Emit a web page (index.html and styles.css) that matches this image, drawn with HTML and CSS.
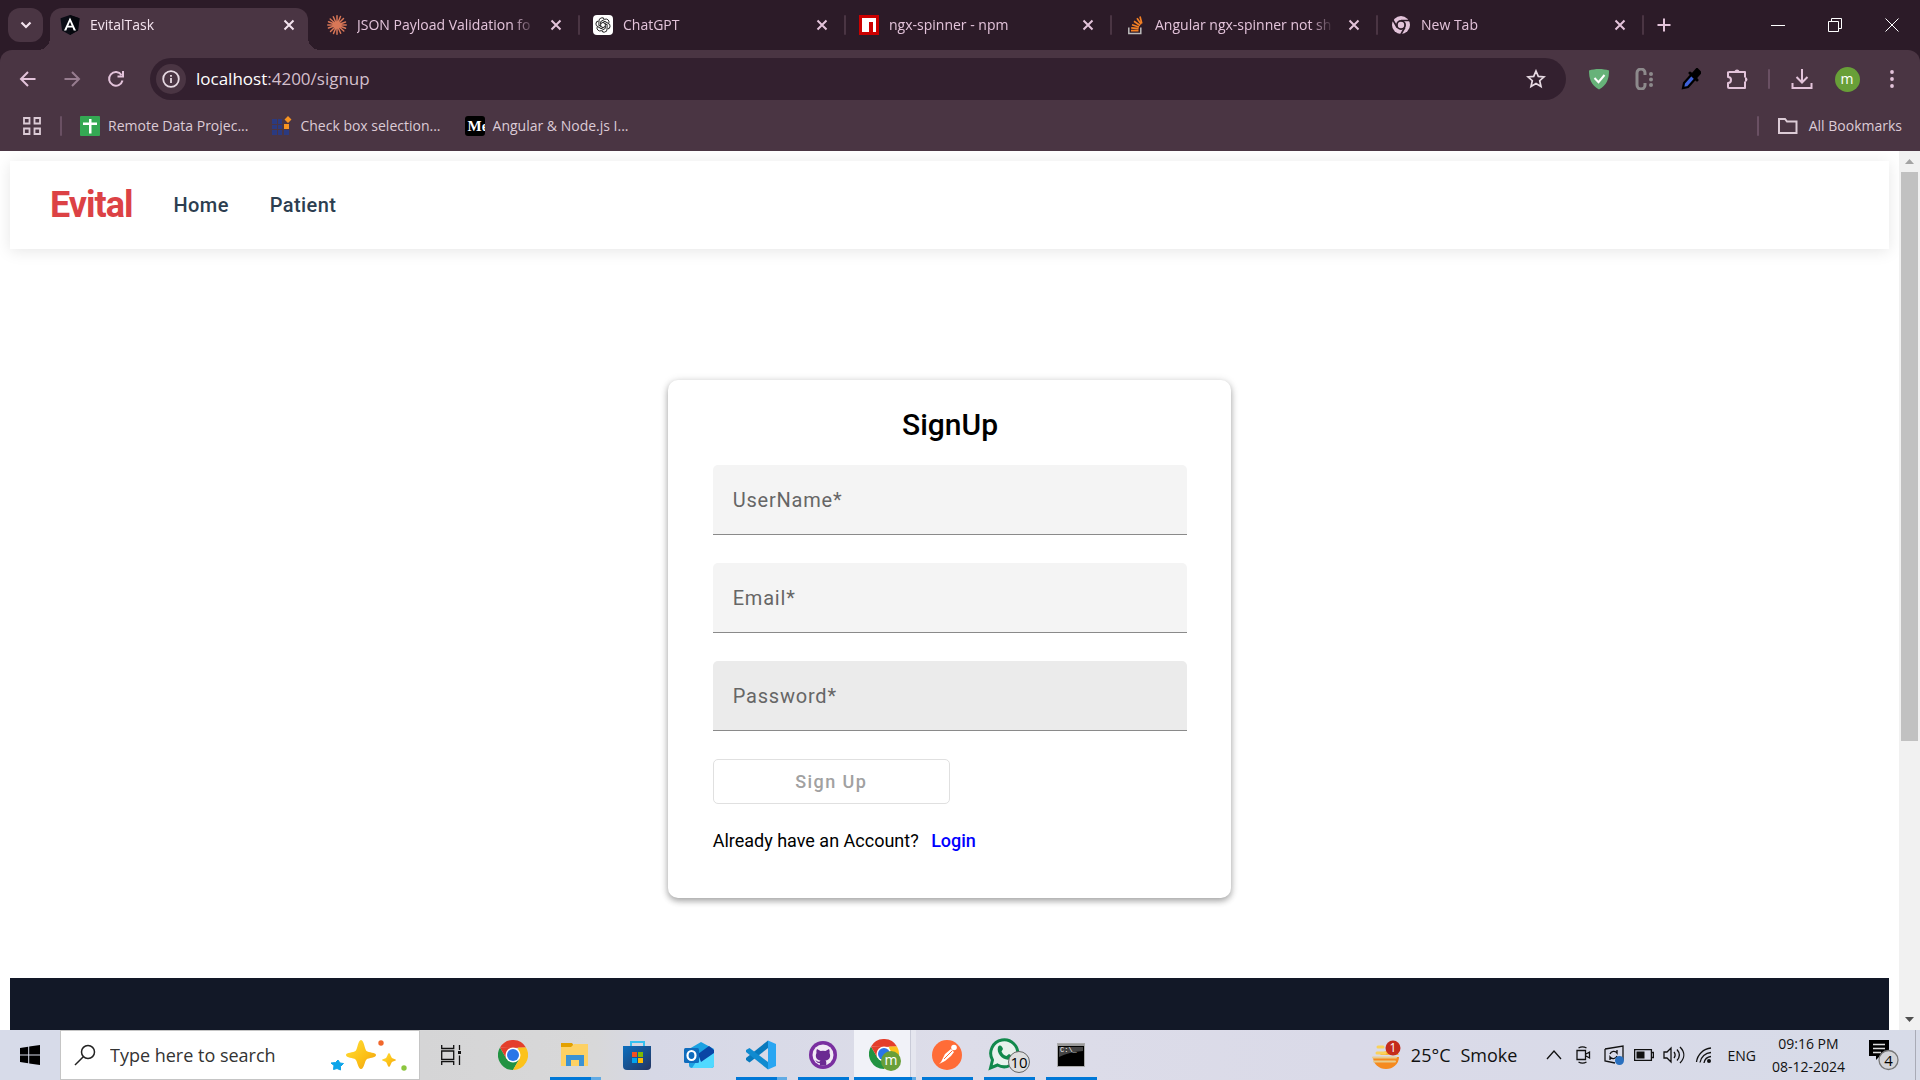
FILE: index.html
```html
<!DOCTYPE html>
<html lang="en">
<head>
<meta charset="utf-8">
<meta name="viewport" content="width=device-width, initial-scale=1">
<title>EvitalTask</title>
<link rel="stylesheet" href="styles.css">
</head>
<body>
<div class="screen">

<header class="browser">
  <div class="strip">
    <button class="tab-search" aria-label="Search tabs"><svg width="12" height="12" viewBox="0 0 12 12"><path d="M1.500 3.500L6 8l4.500-4.500" fill="none" stroke="currentColor" stroke-width="2.200"/></svg></button>
    <div class="tabs">
      <div class="tab active">
        <svg width="20" height="20" viewBox="0 0 20 20"><path d="M10 0l9.500 3.300L18 15.500 10 20l-8-4.500L.5 3.300z" fill="#0b0d16"/><path d="M10 0l9.500 3.300L18 15.500 10 20z" fill="#05070d"/><path d="M10 2.500L4 15.500h2.300l1.200-3h5l1.200 3H16zm0 4.300l1.700 3.900H8.300z" fill="#fff"/></svg>
        <span class="tab-title">EvitalTask</span>
        <button class="close" aria-label="Close tab"><svg width="12" height="12" viewBox="0 0 12 12"><path d="M1.500 1.500l9 9m0-9l-9 9"/></svg></button>
      </div>
      <span class="tab-sep hidden-sep"></span>
      <div class="tab">
        <svg width="20" height="20" viewBox="0 0 20 20"><g stroke="#d97757" stroke-width="1.500" stroke-linecap="round"><path d="M10 .8v18.400M.8 10h18.400M3.200 4l13.600 12M16.500 3.500l-13 13M6.300 1.800l7.400 16.400M13.500 1.500L6.500 18.500M1.500 6.800l17 6.400M18.500 7l-17 6"/></g></svg>
        <span class="tab-title">JSON Payload Validation fo</span>
        <button class="close" aria-label="Close tab"><svg width="12" height="12" viewBox="0 0 12 12"><path d="M1.500 1.500l9 9m0-9l-9 9"/></svg></button>
      </div>
      <span class="tab-sep"></span>
      <div class="tab">
        <svg width="20" height="20" viewBox="0 0 20 20"><rect width="20" height="20" rx="4" fill="#fff"/><g fill="none" stroke="#222" stroke-width="1"><g id="petal"><path d="M7.700 11.300V6.600l3.900-2.200a3 3 0 0 1 4.300 3.500"/></g><use href="#petal" transform="rotate(60 10 10)"/><use href="#petal" transform="rotate(120 10 10)"/><use href="#petal" transform="rotate(180 10 10)"/><use href="#petal" transform="rotate(240 10 10)"/><use href="#petal" transform="rotate(300 10 10)"/></g></svg>
        <span class="tab-title">ChatGPT</span>
        <button class="close" aria-label="Close tab"><svg width="12" height="12" viewBox="0 0 12 12"><path d="M1.500 1.500l9 9m0-9l-9 9"/></svg></button>
      </div>
      <span class="tab-sep"></span>
      <div class="tab">
        <svg width="20" height="20" viewBox="0 0 20 20"><path d="M0 0h20v20H0z" fill="#cb0000"/><path d="M3 3h14v14h-3V7h-4v10H3z" fill="#fff"/></svg>
        <span class="tab-title">ngx-spinner - npm</span>
        <button class="close" aria-label="Close tab"><svg width="12" height="12" viewBox="0 0 12 12"><path d="M1.500 1.500l9 9m0-9l-9 9"/></svg></button>
      </div>
      <span class="tab-sep"></span>
      <div class="tab">
        <svg width="20" height="20" viewBox="0 0 20 20"><path d="M3.800 12.500v6h12v-6" fill="none" stroke="#bcbbbb" stroke-width="1.500"/><path d="M6 15.700h7.500M6.200 12.800l7.400.8M7 9.700l7 2.300M9 6.300l6 4.200M12 3.300l4.200 6M15 1.500l1.800 7" fill="none" stroke="#f48024" stroke-width="1.700"/></svg>
        <span class="tab-title">Angular ngx-spinner not sh</span>
        <button class="close" aria-label="Close tab"><svg width="12" height="12" viewBox="0 0 12 12"><path d="M1.500 1.500l9 9m0-9l-9 9"/></svg></button>
      </div>
      <span class="tab-sep"></span>
      <div class="tab">
        <svg width="20" height="20" viewBox="0 0 20 20"><circle cx="10" cy="10" r="9" fill="#e3c3da"/><circle cx="10" cy="10" r="4.100" fill="#e3c3da" stroke="#2c1b28" stroke-width="1.800"/><path d="M10 5.500h9M6.200 12.500L1.700 4.700M13.800 12.500l-4.500 7.800" stroke="#2c1b28" stroke-width="1.700"/></svg>
        <span class="tab-title">New Tab</span>
        <button class="close" aria-label="Close tab"><svg width="12" height="12" viewBox="0 0 12 12"><path d="M1.500 1.500l9 9m0-9l-9 9"/></svg></button>
      </div>
      <span class="tab-sep"></span>
      <button class="new-tab" aria-label="New tab"><svg width="14" height="14" viewBox="0 0 14 14"><path d="M7 .5v13M.5 7h13" stroke="currentColor" stroke-width="2"/></svg></button>
    </div>
    <div class="window-controls">
      <button aria-label="Minimize"><svg width="14" height="14" viewBox="0 0 14 14"><path d="M0 7.500h14"/></svg></button>
      <button aria-label="Restore"><svg width="14" height="14" viewBox="0 0 14 14"><path d="M.5 3.500h10v10H.5zM3.500 3V.5h10v10H11"/></svg></button>
      <button aria-label="Close"><svg width="14" height="14" viewBox="0 0 14 14"><path d="M.5.5l13 13m0-13l-13 13"/></svg></button>
    </div>
  </div>

  <div class="toolbar">
    <div class="tools">
      <button aria-label="Back"><svg width="20" height="20" viewBox="0 0 20 20"><path d="M17.500 10H3.500M10 3L3 10l7 7" class="line"/></svg></button>
      <button aria-label="Forward" class="dim"><svg width="20" height="20" viewBox="0 0 20 20"><path d="M2.500 10h14M10 3l7 7-7 7" class="line"/></svg></button>
      <button aria-label="Reload"><svg width="20" height="20" viewBox="0 0 20 20"><path d="M16.500 11.500A6.800 6.800 0 1 1 15.500 6M17 2v5.500h-5.500" class="line"/></svg></button>
    </div>
    <div class="omnibox">
      <button class="site-info" aria-label="Site information"><svg width="18" height="18" viewBox="0 0 18 18"><circle cx="9" cy="9" r="7.800" fill="none" stroke="currentColor" stroke-width="1.800"/><path d="M9 8v5M9 5v1.800" stroke="currentColor" stroke-width="1.800"/></svg></button>
      <span class="url"><b>localhost</b>:4200/signup</span>
      <button class="star" aria-label="Bookmark this tab"><svg width="20" height="20" viewBox="0 0 20 20"><path d="M10 2l2.300 5.400 5.700.5-4.300 3.800 1.300 5.700-5-3-5 3 1.300-5.700L2 7.900l5.700-.5z" fill="none" stroke="currentColor" stroke-width="1.700"/></svg></button>
    </div>
    <div class="tools extensions">
      <button aria-label="AdGuard"><svg width="22" height="22" viewBox="0 0 22 22"><path d="M11 1C7.500 1 4 1.500 1 2.500 1 11 3 17 11 21.500 19 17 21 11 21 2.500 18 1.500 14.500 1 11 1z" fill="#67b279"/><path d="M6.500 10l4 4.200L16.500 7" fill="none" stroke="#fff" stroke-width="2"/></svg></button>
      <button aria-label="Clear cache"><svg width="20" height="22" viewBox="0 0 20 22"><path d="M10 7V5a4 4 0 0 0-8 0v12a4 4 0 0 0 8 0v-2" fill="none" stroke="#8d8a8c" stroke-width="3"/><g fill="#8d8a8c"><circle cx="16" cy="6" r="2"/><circle cx="16" cy="11.500" r="2"/><circle cx="16" cy="17" r="2"/></g></svg></button>
      <button aria-label="Color picker"><svg width="20" height="22" viewBox="0 0 20 22"><path d="M2 20l1-5 8-9 4 4-8 9z" fill="#3f62d9" stroke="#000" stroke-width="2.200"/><path d="M9 5l7 7M12 6l4-4.500 3 3L15 9z" stroke="#000" stroke-width="3" stroke-linecap="round"/></svg></button>
      <button aria-label="Extensions"><svg width="22" height="22" viewBox="0 0 22 22"><path d="M3 4h16v5.500M19 13.500V20H3a1 1 0 0 1-1-1v-4a3 3 0 0 0 0-6V4.500L3 4" class="line" stroke-linejoin="round"/><path d="M8.500 4a2.500 2.500 0 0 1 5 0zM19 9a2.500 2.500 0 0 1 0 5z" fill="currentColor"/></svg></button>
    </div>
    <span class="bar-sep"></span>
    <div class="tools actions">
      <button aria-label="Downloads"><svg width="22" height="22" viewBox="0 0 22 22"><path d="M11 1v13M5.500 9l5.500 5.500L16.500 9M1.500 15v5h19v-5" class="line"/></svg></button>
      <button aria-label="Profile"><span class="avatar">m</span></button>
      <button aria-label="Menu"><svg width="20" height="20" viewBox="0 0 20 20" fill="currentColor"><circle cx="10" cy="3" r="1.900"/><circle cx="10" cy="10" r="1.900"/><circle cx="10" cy="17" r="1.900"/></svg></button>
    </div>
  </div>

  <nav class="bookmarks" aria-label="Bookmarks">
    <button class="apps" aria-label="Apps"><svg width="20" height="20" viewBox="0 0 20 20"><path d="M2 2h5.500v5.500H2zM12.500 2H18v5.500h-5.500zM2 12.500h5.500V18H2zM12.500 12.500H18V18h-5.500z" fill="none" stroke="currentColor" stroke-width="1.800"/></svg></button>
    <span class="bar-sep"></span>
    <a class="bookmark" href="#"><svg width="20" height="20" viewBox="0 0 20 20"><rect width="20" height="20" rx="1" fill="#34a853"/><path d="M9 3h2.500v3.500H17V9h-5.500v8.500H9V9H3V6.500h6z" fill="#fff"/></svg>Remote Data Projec...</a>
    <a class="bookmark" href="#"><svg width="20" height="20" viewBox="0 0 20 20"><path d="M0 3h5v5H0zM6 3h4v5H6zM0 9h5v4H0zM6 9h4v4H6zM0 14h5v5H0zM6 14h4v5H6zM12 14h5v5h-5z" fill="#2b3a80"/><path d="M12 8h5v5h-5zM16 0l3.500 3.500L16 7l-3.500-3.500z" fill="#f79421"/></svg>Check box selection...</a>
    <a class="bookmark" href="#"><span class="medium" aria-hidden="true">Me</span>Angular &amp; Node.js I...</a>
    <span class="bar-sep all-sep"></span>
    <a class="bookmark all" href="#"><svg width="22" height="18" viewBox="0 0 22 18"><path d="M2 2h6l2 2.500h9.500V16H2z" class="line"/></svg>All Bookmarks</a>
  </nav>
</header>

<div class="viewport">
  <div class="page">
    <nav class="navbar">
      <a class="brand" href="#">Evital</a>
      <a class="nav-link" href="#">Home</a>
      <a class="nav-link" href="#">Patient</a>
    </nav>
    <main class="main">
      <form class="card">
        <h1 class="card-title">SignUp</h1>
        <div class="field"><label for="username">UserName*</label><input id="username" type="text"></div>
        <div class="field"><label for="email">Email*</label><input id="email" type="email"></div>
        <div class="field hovered"><label for="password">Password*</label><input id="password" type="password"></div>
        <button class="submit" type="submit" disabled>Sign Up</button>
        <p class="account">Already have an Account? <a href="#">Login</a></p>
      </form>
    </main>
    <footer class="footer"></footer>
  </div>
  <div class="scrollbar" aria-hidden="true">
    <svg width="21" height="21" viewBox="0 0 21 21"><path d="M6 13l4.500-5L15 13z" fill="#a3a3a3"/></svg>
    <div class="track"><div class="thumb"></div></div>
    <svg width="21" height="21" viewBox="0 0 21 21"><path d="M6 8l4.500 5L15 8z" fill="#505050"/></svg>
  </div>
</div>

<footer class="taskbar">
  <button class="start" aria-label="Start"><svg width="20" height="20" viewBox="0 0 20 20"><path d="M0 3l8.200-1.200V9.500H0zM9.200 1.600L20 0v9.500H9.200zM0 10.500h8.200v7.700L0 17zM9.200 10.500H20V20L9.200 18.400z"/></svg></button>
  <label class="search">
    <svg width="22" height="22" viewBox="0 0 22 22"><circle cx="14" cy="8" r="6.500" fill="none" stroke="#222" stroke-width="1.500"/><path d="M9.300 12.700L1 21" stroke="#222" stroke-width="1.500"/></svg>
    <input type="text" placeholder="Type here to search" aria-label="Type here to search">
    <svg width="78" height="32" viewBox="0 0 78 32"><defs><linearGradient id="gold" x1="0" y1="0" x2="1" y2="1"><stop offset="0" stop-color="#ffe03a"/><stop offset=".6" stop-color="#fcbf15"/><stop offset="1" stop-color="#e99a1c"/></linearGradient></defs><path d="M30 1c3 0 3.500 9 5.500 11S45 13 45 16s-7.500 2.500-9.500 4.500S33 30 30 30s-3.500-7.500-5.500-9.500S15 19 15 16s7.500-2 9.500-4S27 1 30 1z" fill="url(#gold)"/><path d="M58 14c1 0 2 4 3 5s4 1 4 2-3 1-4 2-2 5-3 5-2-4-3-5-4-1-4-2 3-1 4-2 2-5 3-5z" fill="url(#gold)"/><path d="M7 21l2 3 3.500.500-3 3 0 3.500-3.500-1.500-3.500 1 .5-4L0 24l4.500-.5z" fill="#0ea5e9" stroke="#0ea5e9" stroke-width="1" stroke-linejoin="round"/><circle cx="50" cy="4" r="2.700" fill="#f1672b"/><circle cx="73" cy="29" r="2.700" fill="#8cc63f"/></svg>
  </label>
  <div class="apps-row">
    <button class="app" aria-label="Task view"><svg width="20" height="20" viewBox="0 0 20 20" fill="none" stroke="#111" stroke-width="1.300"><path d="M.7 0v3.500h12V0M.7 6h12v8.500H.7zM.7 20v-3.300h12V20M18.500 0v5M18.500 10.500V20"/><path d="M17 6h3v3h-3z" fill="#111" stroke="none"/></svg></button>
    <button class="app" aria-label="Chrome"><svg width="30" height="30" viewBox="0 0 30 30"><g id="chrome"><path d="M2 7.500A15 15 0 0 1 28 7.500L15 8z" fill="#e43e2b"/><path d="M2 7.500A15 15 0 0 0 15 30l6.500-11.200L15 21l-6.500-2.200z" fill="#229342"/><path d="M28 7.500A15 15 0 0 1 15 30l6.500-11.200L20 7.500z" fill="#fcc21b"/><path d="M2 7.500h26H15L8.500 18.800z" fill="#e43e2b"/><circle cx="15" cy="15" r="7.500" fill="#fff"/><circle cx="15" cy="15" r="6" fill="#2a76e8"/></g></svg></button>
    <button class="app open stacked" aria-label="File Explorer"><svg width="30" height="30" viewBox="0 0 30 30"><path d="M1 3h11l2 3v4H1z" fill="#e3a100"/><path d="M1 7h10l3-3h14v22H1z" fill="#fdd164"/><path d="M6 26V15h18v11h-5v-6h-8v6z" fill="#3b92d4"/></svg></button>
    <button class="app" aria-label="Microsoft Store"><svg width="30" height="30" viewBox="0 0 30 30"><defs><linearGradient id="store" x1="0" y1="0" x2="1" y2="1"><stop offset="0" stop-color="#0b6fc0"/><stop offset="1" stop-color="#25345f"/></linearGradient></defs><path d="M9 9V2h13v7" fill="none" stroke="#35c1f1" stroke-width="2"/><path d="M1 6h28v20a4 4 0 0 1-4 4H5a4 4 0 0 1-4-4z" fill="url(#store)"/><path d="M10 12h5v5h-5z" fill="#f25022"/><path d="M16 12h5v5h-5z" fill="#7fba00"/><path d="M10 18h5v5h-5z" fill="#00a4ef"/><path d="M16 18h5v5h-5z" fill="#ffb900"/></svg></button>
    <button class="app" aria-label="Outlook"><svg width="30" height="30" viewBox="0 0 30 30"><path d="M5 9l12-7 13 7v16a3 3 0 0 1-3 3H8a3 3 0 0 1-3-3z" fill="#1ba1e2"/><path d="M16 16l14-7v16a3 3 0 0 1-3 3H8z" fill="#50d9ff"/><path d="M14 14L25 6l5 4v3L17 22z" fill="#0a45a5"/><rect y="8" width="15" height="15" rx="1.500" fill="#0f6cbd"/><ellipse cx="7.500" cy="15.500" rx="4" ry="4.500" fill="none" stroke="#fff" stroke-width="2.200"/></svg></button>
    <button class="app open stacked" aria-label="Visual Studio Code"><svg width="30" height="30" viewBox="0 0 30 30"><path d="M22 .5V8L3.500 22.500 0 20v-2z" fill="#0879bd"/><path d="M22 29.500V22L3.500 8 0 10v2z" fill="#108bd0"/><path d="M22 .5L30 4v22l-8 3.500z" fill="#29a6f2"/></svg></button>
    <button class="app open" aria-label="GitHub Desktop"><svg width="28" height="28" viewBox="0 0 28 28"><circle cx="14" cy="14" r="14" fill="#7a2fa0"/><circle cx="14" cy="14" r="10.500" fill="#f1eaf5"/><path d="M8 8l3.500 2a10 10 0 0 1 5 0L20 8c1 2 .6 3 .5 4 1.500 3 .5 7-4 7.500 1 1 .8 2 .8 5h-6.500v-2.500c-3 .5-3-1.500-4.500-2.500 2-.5 2 2 4.500 1 0-.5.300-.8.700-1-4.500-.5-5.500-4.500-4-7.500 0-1-.5-2 .5-4z" fill="#6b2a92"/></svg></button>
    <button class="app open current" aria-label="Chrome, profile m"><svg width="32" height="32" viewBox="0 0 32 32"><use href="#chrome"/><circle cx="22" cy="22" r="10" fill="#689f38"/><text x="22" y="26" text-anchor="middle" class="badge-m">m</text></svg></button>
    <button class="app open" aria-label="Postman"><svg width="30" height="30" viewBox="0 0 30 30"><circle cx="15" cy="15" r="15" fill="#ff6c37"/><path d="M19 9l3 3-3 4-6 5-6 3 2-2 4-8z" fill="#fff"/><circle cx="22" cy="7.500" r="2.800" fill="#fff"/><path d="M12 19l8-8" stroke="#ff6c37" stroke-width="1"/></svg></button>
    <button class="app open" aria-label="WhatsApp"><svg width="42" height="36" viewBox="0 0 42 36"><path d="M2.500 31l2-8a13.500 13.500 0 1 1 5 5z" fill="#e8f2ed" stroke="#11894c" stroke-width="3"/><path d="M10 10c2-3 4-1 5 2l-1.500 2.500c1.500 3 3 4 5 4.500L21 17c4 2 4 3 2 5-7 3-15-5-13-12z" fill="#11894c"/><circle cx="31" cy="25" r="10.500" fill="#dededf" stroke="#666"/><text x="31" y="31" text-anchor="middle" class="badge-count">10</text></svg></button>
    <button class="app open" aria-label="Command Prompt"><svg width="28" height="24" viewBox="0 0 28 24"><path d="M.5.5h27v23H.5z" fill="#000" stroke="#aaa"/><path d="M1 1h26v2H1z" fill="#999"/><path d="M2 4h24v4Q12 9 2 14z" fill="#444"/><text x="3" y="9" class="prompt">C:\_</text></svg></button>
  </div>
  <div class="tray">
    <button class="weather"><svg width="30" height="30" viewBox="0 0 30 30"><path d="M2 17h26a13 12 0 0 1-26 0z" fill="#f58a1f"/><path d="M9 15a12 11 0 0 1 19 0z" fill="#f9b233"/><path d="M7 7h5M6 13h8" stroke="#fad25a" stroke-width="3"/><path d="M2 17.500h23M3 21.500h21" stroke="#e9cc8c" stroke-width="2"/><circle cx="22" cy="8" r="7.500" fill="#c42b1c"/><text x="22" y="12" text-anchor="middle" class="badge-one">1</text></svg><span>25°C</span><span>Smoke</span></button>
    <button aria-label="Show hidden icons"><svg width="16" height="16" viewBox="0 0 16 16"><path d="M1 12l7-8 7 8"/></svg></button>
    <button aria-label="Meet now"><svg width="16" height="18" viewBox="0 0 16 18"><path d="M1 4.500h8.500v9H1zM10 8l3.500-2v6L10 10M2.500 2C5 .5 8 .5 10.500 2M2.500 16c2.500 1.500 5.500 1.500 8 0"/></svg></button>
    <button aria-label="Updates"><svg width="20" height="20" viewBox="0 0 20 20"><path d="M1 4l18-3v14M1 4v12l10 2M6 9a4 4 0 0 1 7-1V5M13 11a4 4 0 0 1-7 1v3"/><circle cx="15.500" cy="15.500" r="4.500" fill="#2a70bf" stroke="none"/></svg></button>
    <button aria-label="Battery"><svg width="20" height="12" viewBox="0 0 20 12"><path d="M.6.6h16.800v10.800H.6zM18 3.500h1.400v5H18"/><path d="M2.500 2.500h8v7h-8z" fill="#111" stroke="none"/></svg></button>
    <button aria-label="Volume"><svg width="22" height="18" viewBox="0 0 22 18"><path d="M1 6h3l4-4v14l-4-4H1zM11 6c1.500 2 1.500 4 0 6M14 3.500c3 3.500 3 7.500 0 11M17 1c5 5 5 11 0 16"/></svg></button>
    <button aria-label="Network"><svg width="18" height="18" viewBox="0 0 18 18"><path d="M1.500 16A16 16 0 0 1 16 2M5 16.500A12 12 0 0 1 16 6.500M9 17a8 8 0 0 1 7-6.500"/><circle cx="14" cy="15" r="2" fill="#111" stroke="none"/></svg></button>
    <span class="lang">ENG</span>
    <div class="clock"><span>09:16 PM</span><span>08-12-2024</span></div>
    <button class="notify" aria-label="Notifications"><svg width="30" height="32" viewBox="0 0 30 32"><path d="M0 1h20v16h-9l-4 4v-4H0z" fill="#000" stroke="none"/><path d="M4 5.500h12M4 9.500h12M4 13.500h8" stroke="#ddd"/><circle cx="19.500" cy="21" r="9.500" fill="#d3d4d8" stroke="#777"/><text x="19.500" y="27" text-anchor="middle" class="badge-count">4</text></svg></button>
    <span class="desktop-edge"></span>
  </div>
</footer>

</div>
</body>
</html>
```

FILE: styles.css
```css
* { box-sizing: border-box; }
body { margin: 0; font-family: "Open Sans", "Noto Sans", sans-serif; font-size: 14px; }
button { border: 0; padding: 0; margin: 0; background: none; color: inherit; font: inherit; display: flex; align-items: center; justify-content: center; }
a { color: inherit; text-decoration: none; }
svg { display: block; flex: none; }

.screen { height: 100vh; display: flex; flex-direction: column; overflow: hidden; }

/* Browser frame */
.browser { flex: none; background: #2c1b28; color: #e3c3da; }
.strip { height: 50px; display: flex; align-items: flex-end; padding-left: 8px; }
.tab-search { width: 35px; height: 34px; margin: 0 7px 8px 0; border-radius: 12px; background: #4a3543; color: #f3e3ee; }
.tabs { flex: 1; min-width: 0; display: flex; align-items: center; }
.tab { position: relative; flex: 0 1 258px; min-width: 0; height: 42px; display: flex; align-items: center; gap: 10px; padding: 0 9px 8px 10px; }
.active { background: #4a3543; border-radius: 12px 12px 0 0; color: #f3e3ee; }
.active::before, .active::after { content: ""; position: absolute; bottom: 0; width: 12px; height: 12px; }
.active::before { left: -12px; background: radial-gradient(circle at 0 0, transparent 12px, #4a3543 12px); }
.active::after { right: -12px; background: radial-gradient(circle at 100% 0, transparent 12px, #4a3543 12px); }
.tab-title { flex: 1; min-width: 0; overflow: hidden; white-space: nowrap; line-height: 22px; -webkit-mask-image: linear-gradient(to right, #000 calc(100% - 24px), transparent); mask-image: linear-gradient(to right, #000 calc(100% - 24px), transparent); }
.close { width: 20px; height: 20px; }
.close svg { fill: none; stroke: currentColor; stroke-width: 2; }
.tab-sep { flex: none; width: 2px; height: 20px; margin: 0 3px 8px; background: #4a3543; border-radius: 1px; }
.hidden-sep { width: 3px; visibility: hidden; }
.new-tab { width: 34px; height: 34px; margin-bottom: 8px; }
.window-controls { display: flex; color: #fff; }
.window-controls button { width: 57px; height: 50px; }
.window-controls svg { fill: none; stroke: currentColor; stroke-width: 1; }

.toolbar { display: flex; align-items: center; height: 58px; padding: 0 10px; background: #4a3543; border-radius: 12px 12px 0 0; }
.tools { display: flex; gap: 8px; }
.tools button { width: 36px; height: 36px; }
.extensions { gap: 10px; margin-left: 15px; }
.actions { gap: 9px; }
.line { fill: none; stroke: currentColor; stroke-width: 2; }
.dim { opacity: .5; }
.omnibox { flex: 1; min-width: 0; height: 42px; margin-left: 16px; display: flex; align-items: center; padding: 0 12px 0 6px; border-radius: 21px; background: #33202f; color: #e6d9e2; }
.site-info { width: 30px; height: 30px; border-radius: 15px; background: #4a3543; }
.url { flex: 1; margin-left: 10px; font-size: 17px; line-height: 24px; color: #d3bfcc; }
.url b { font-weight: 400; color: #fff; }
.star { width: 36px; height: 36px; }
.bar-sep { flex: none; width: 2px; height: 20px; margin: 0 14px 0 13px; border-radius: 1px; background: #6a5063; }
.avatar { width: 25px; height: 25px; border-radius: 50%; background: #689f38; color: #fff; font-size: 14px; line-height: 23px; text-align: center; }

.bookmarks { height: 43px; display: flex; align-items: center; padding: 0 18px 7px 22px; background: #4a3543; color: #dccbd6; }
.bookmarks .bar-sep { margin: 0 18px; }
.bookmark { display: flex; align-items: center; gap: 8px; margin-right: 24px; white-space: nowrap; line-height: 20px; }
.medium { width: 20px; height: 20px; overflow: hidden; padding-left: 3px; border-radius: 3px; background: #000; color: #fff; font: 700 15px/20px "Liberation Serif", serif; }
.bookmarks .all-sep { margin-left: auto; }
.all { margin-right: 0; gap: 10px; }

/* Web page */
.viewport { flex: 1; min-height: 0; display: flex; background: #fff; }
.page { flex: 1; min-width: 0; overflow: hidden; padding: 10px 10px 0; font-family: Roboto, sans-serif; }
.navbar { display: flex; align-items: center; gap: 41px; height: 88px; padding: 0 40px; box-shadow: 0 2px 15px rgba(0, 0, 0, .1); }
.brand { color: #dc4245; font-size: 36px; font-weight: 700; letter-spacing: -1px; }
.nav-link { color: #2c3e50; font-size: 20px; font-weight: 500; letter-spacing: .02em; }
.main { padding: 131px 0 80px; }
.card { width: 30%; margin: 0 auto; padding: 24px 44px 45px 45px; border-radius: 10px; background: #fff; box-shadow: 0 3px 6px rgba(0, 0, 0, .3), 0 1px 10px rgba(0, 0, 0, .12); display: flex; flex-direction: column; }
.card-title { margin: 0 0 20px; font-size: 30px; line-height: 41px; font-weight: 500; text-align: center; color: #000; }
.field { height: 70px; margin-bottom: 28px; display: flex; align-items: center; padding: 0 20px; background: #f4f4f4; border-bottom: 1px solid #8a8a8a; border-radius: 5px 5px 0 0; }
.field label { color: #666; font-size: 20px; letter-spacing: .04em; }
.field input { flex: 1; min-width: 0; height: 30px; border: 0; outline: 0; background: transparent; font: inherit; font-size: 20px; }
.hovered { background: #ebebeb; }
.submit { width: 50%; height: 45px; border: 1px solid #e0e0e0; border-radius: 5px; color: #a1a1a1; font-size: 18px; font-weight: 500; letter-spacing: .08em; }
.account { margin: 25px 0 0; font-size: 18px; line-height: 24px; color: #000; }
.account a { margin-left: 8px; color: #00f; font-weight: 500; }
.footer { height: 240px; background: #121827; }
.scrollbar { flex: none; width: 21px; display: flex; flex-direction: column; background: #f1f1f1; }
.track { flex: 1; padding: 0 2px; }
.thumb { height: 68%; background: #c1c1c1; }

/* Taskbar */
.taskbar { flex: none; height: 50px; display: flex; color: #111; background: linear-gradient(to right, #d7dbe9 0, #d7dbe9 3%, #d5d5d6 22%, #d8d8d9 31%, #d6d8e6 34%, #dddde9 50%, #dadae8 70%, #d7dbe8 100%); }
.start { width: 60px; }
.search { flex: 0 1 360px; min-width: 0; display: flex; align-items: center; gap: 14px; padding: 0 10px 0 13px; background: #fff; border: 1px solid #c5c5c5; }
.search input { flex: 1; min-width: 0; border: 0; padding: 0; outline: 0; background: none; font: 18px/26px "Open Sans", sans-serif; color: #222; }
.search input::placeholder { color: #333; opacity: 1; }
.apps-row { display: flex; }
.app { position: relative; width: 62px; height: 50px; }
.open::after { content: ""; position: absolute; left: 6px; right: 5px; bottom: 0; height: 3px; background: #0078d7; }
.stacked::after { background: linear-gradient(to right, #0078d7 80%, #62abe4 80%); }
.current { background: linear-gradient(to right, #f1f2f8 56px, #c9cbd8 56px, #c9cbd8 57px, #e5e6ef 57px); }
.current::after { left: 0; right: 0; background: linear-gradient(to right, #0078d7 94%, #62abe4 94%); }
.badge-m { font: 14px "Open Sans", sans-serif; fill: #fff; }
.badge-count { font: 15px "Open Sans", sans-serif; fill: #000; stroke: none; }
.badge-one { font: 12px "Open Sans", sans-serif; fill: #fff; }
.prompt { font: 7px "Liberation Mono", monospace; fill: #fff; }
.tray { margin-left: auto; display: flex; align-items: center; }
.tray button { width: 30px; height: 50px; }
.tray svg { fill: none; stroke: #111; stroke-width: 1.3; }
.tray svg text, .tray .weather svg { stroke: none; }
.tray .weather { width: auto; gap: 10px; margin-right: 22px; font-size: 18px; }
.weather svg path { stroke-linecap: round; }
.lang { margin-left: 8px; }
.clock { display: flex; flex-direction: column; align-items: center; margin: 0 24px 0 16px; line-height: 23px; }
.desktop-edge { width: 1px; height: 50px; margin: 0 4px 0 16px; background: #a9abb6; }
```
